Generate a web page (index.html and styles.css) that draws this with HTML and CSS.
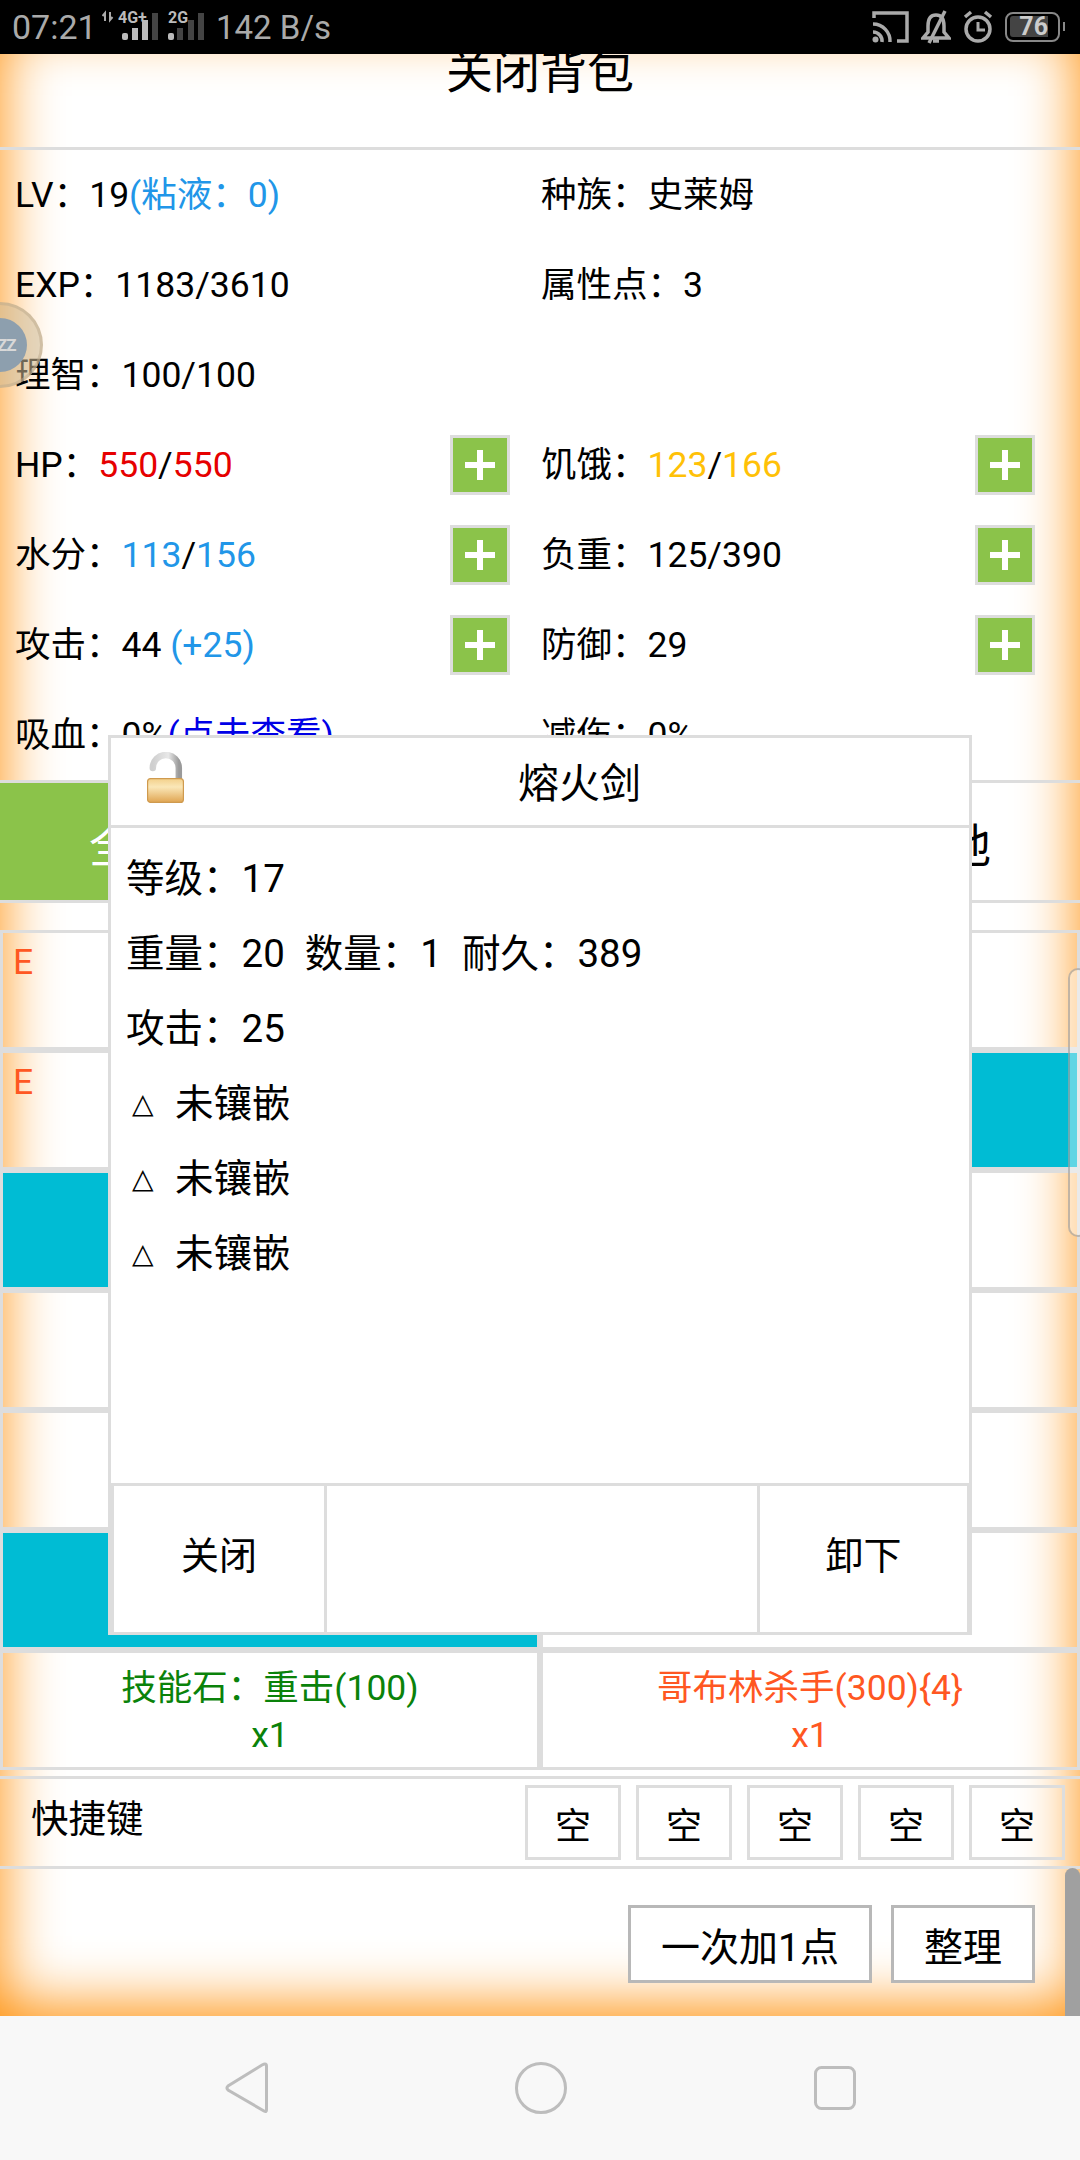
FILE: index.html
```html
<!DOCTYPE html>
<html lang="zh-CN">
<head>
<meta charset="utf-8">
<title>背包</title>
<link rel="stylesheet" href="styles.css">
</head>
<body>
<div class="screen">
  <header class="statusbar">
    <span class="time">07:21</span>
    <svg class="sig sig-4g" width="58" height="54" viewBox="0 0 58 54">
      <path d="M3 21 V13 L0.5 16 M8 12 V20 L10.5 17" fill="none" stroke="#aaa" stroke-width="2"/>
      <text x="16" y="23" class="sig-text">4G+</text>
      <rect x="20" y="33" width="6" height="7" rx="2" fill="#bbb"/>
      <rect x="30" y="28" width="6" height="12" fill="#bbb"/>
      <rect x="40" y="20" width="6" height="20" fill="#bbb"/>
      <rect x="50" y="13" width="6" height="27" fill="#444"/>
    </svg>
    <svg class="sig sig-2g" width="37" height="54" viewBox="0 0 37 54">
      <text x="0" y="23" class="sig-text">2G</text>
      <rect x="0" y="33" width="6" height="7" rx="2" fill="#bbb"/>
      <rect x="9" y="28" width="6" height="12" fill="#444"/>
      <rect x="20" y="20" width="6" height="20" fill="#444"/>
      <rect x="30" y="13" width="6" height="27" fill="#444"/>
    </svg>
    <span class="speed">142 B/s</span>
    <div class="status-right">
      <svg width="37" height="34" viewBox="0 0 37 34" fill="none" stroke="#aaa" stroke-width="3.5">
        <path d="M2 8 V3 H35 V31 H25"/>
        <path d="M1 14 A17 17 0 0 1 18 32"/>
        <path d="M1 22 A9 9 0 0 1 10 32"/>
        <circle cx="3.5" cy="29.5" r="3" fill="#aaa" stroke="none"/>
      </svg>
      <svg width="30" height="34" viewBox="0 0 30 34" fill="none" stroke="#aaa" stroke-width="3.5">
        <path d="M15 5 C9 5 7 10 7 16 V22 L2 28 H28 L23 22 V16 C23 10 21 5 15 5 Z"/>
        <path d="M12 31 H18"/>
        <path d="M24 1 L8 33"/>
      </svg>
      <svg width="30" height="34" viewBox="0 0 30 34" fill="none" stroke="#aaa" stroke-width="3.5">
        <circle cx="15" cy="19" r="12"/>
        <path d="M15 12 V20 H22" stroke-width="3"/>
        <path d="M2 7 L8 2 M28 7 L22 2"/>
      </svg>
      <div class="battery"><span class="battery-level">76</span></div>
    </div>
  </header>

  <main class="page">
    <div class="title">关闭背包</div>

    <section class="stats">
      <div class="stat"><span>LV：19<span class="blue">(粘液：0)</span></span></div>
      <div class="stat stat-r"><span>种族：史莱姆</span></div>
      <div class="stat"><span>EXP：1183/3610</span></div>
      <div class="stat stat-r"><span>属性点：3</span></div>
      <div class="stat"><span>理智：100/100</span></div>
      <div class="stat stat-r"></div>
      <div class="stat"><span>HP：<span class="red">550</span>/<span class="red">550</span></span>
        <div class="plus"><svg width="30" height="30" viewBox="0 0 30 30"><path d="M15 0 V30 M0 15 H30" stroke="#fff" stroke-width="6"/></svg></div></div>
      <div class="stat stat-r"><span>饥饿：<span class="yellow">123</span>/<span class="yellow">166</span></span>
        <div class="plus"><svg width="30" height="30" viewBox="0 0 30 30"><path d="M15 0 V30 M0 15 H30" stroke="#fff" stroke-width="6"/></svg></div></div>
      <div class="stat"><span>水分：<span class="blue">113</span>/<span class="blue">156</span></span>
        <div class="plus"><svg width="30" height="30" viewBox="0 0 30 30"><path d="M15 0 V30 M0 15 H30" stroke="#fff" stroke-width="6"/></svg></div></div>
      <div class="stat stat-r"><span>负重：125/390</span>
        <div class="plus"><svg width="30" height="30" viewBox="0 0 30 30"><path d="M15 0 V30 M0 15 H30" stroke="#fff" stroke-width="6"/></svg></div></div>
      <div class="stat"><span>攻击：44 <span class="blue">(+25)</span></span>
        <div class="plus"><svg width="30" height="30" viewBox="0 0 30 30"><path d="M15 0 V30 M0 15 H30" stroke="#fff" stroke-width="6"/></svg></div></div>
      <div class="stat stat-r"><span>防御：29</span>
        <div class="plus"><svg width="30" height="30" viewBox="0 0 30 30"><path d="M15 0 V30 M0 15 H30" stroke="#fff" stroke-width="6"/></svg></div></div>
      <div class="stat"><span>吸血：0%<span class="link">(点击查看)</span></span></div>
      <div class="stat stat-r"><span>减伤：0%</span></div>
    </section>

    <nav class="tabs">
      <div class="tab tab-on">全部</div>
      <div class="tab"></div>
      <div class="tab"></div>
      <div class="tab">其他</div>
    </nav>

    <section class="items">
      <div class="item"><span class="rank">E</span></div>
      <div class="item"></div>
      <div class="item"><span class="rank">E</span></div>
      <div class="item item-on"></div>
      <div class="item item-on"></div>
      <div class="item"></div>
      <div class="item"></div>
      <div class="item"></div>
      <div class="item"></div>
      <div class="item"></div>
      <div class="item item-on"></div>
      <div class="item"></div>
      <div class="item item-text green">技能石：重击(100)<br>x1</div>
      <div class="item item-text orange">哥布林杀手(300){4}<br>x1</div>
    </section>

    <section class="quick">
      <div class="quick-label">快捷键</div>
      <div class="slots">
        <div class="slot">空</div>
        <div class="slot">空</div>
        <div class="slot">空</div>
        <div class="slot">空</div>
        <div class="slot">空</div>
      </div>
    </section>

    <div class="actions">
      <div class="action">一次加1点</div>
      <div class="action">整理</div>
    </div>

    <div class="ball"><div class="ball-core">ZZ</div></div>
    <div class="side-tab"></div>
    <div class="scrollbar"></div>

    <div class="dialog">
      <div class="dialog-head">
        <svg class="lock" width="37" height="51" viewBox="0 0 37 51">
          <defs>
            <linearGradient id="shackle" x1="0" y1="0" x2="1" y2="0">
              <stop offset="0" stop-color="#cfcfcf"/>
              <stop offset="0.6" stop-color="#e8e8e8"/>
              <stop offset="1" stop-color="#9a9a9a"/>
            </linearGradient>
            <linearGradient id="lockbody" x1="0" y1="0" x2="0" y2="1">
              <stop offset="0" stop-color="#f3d08a"/>
              <stop offset="0.35" stop-color="#fae7b8"/>
              <stop offset="1" stop-color="#e0a552"/>
            </linearGradient>
          </defs>
          <path d="M5.8 16 A13 13 0 0 1 31.8 16 V27" fill="none" stroke="url(#shackle)" stroke-width="6.5" stroke-linecap="round"/>
          <rect x="0.6" y="26.6" width="35.8" height="23.8" rx="3" fill="url(#lockbody)" stroke="#cf9a4e" stroke-width="1.2"/>
        </svg>
        <div class="dialog-title">熔火剑</div>
      </div>
      <div class="dialog-body">
        <div class="line">等级：17</div>
        <div class="line">重量：20<span class="sep"></span>数量：1<span class="sep"></span>耐久：389</div>
        <div class="line">攻击：25</div>
        <div class="line"><span class="tri">△</span>未镶嵌</div>
        <div class="line"><span class="tri">△</span>未镶嵌</div>
        <div class="line"><span class="tri">△</span>未镶嵌</div>
      </div>
      <div class="dialog-foot">
        <div class="foot-btn foot-a">关闭</div>
        <div class="foot-btn foot-b"></div>
        <div class="foot-btn foot-c">卸下</div>
      </div>
    </div>
  </main>

  <footer class="navbar">
    <svg width="43" height="52" viewBox="0 0 43 52"><path d="M40 2 Q41.500 2 41.500 4 V48 Q41.500 50.500 39 49 L3 28 Q1 26 3 24 L37 3 Q39 2 40 2 Z" class="nav-i"/></svg>
    <svg width="52" height="52" viewBox="0 0 52 52"><circle cx="26" cy="26" r="24.500" class="nav-i"/></svg>
    <svg width="42" height="44" viewBox="0 0 42 44"><rect x="1.500" y="1.500" width="39" height="41" rx="6" class="nav-i"/></svg>
  </footer>
</div>
</body>
</html>
```

FILE: styles.css
```css
* { box-sizing: border-box; }
html, body { margin: 0; padding: 0; width: 1080px; height: 2160px; overflow: hidden; background: #fff; }
body { font-family: Roboto, "Noto Sans CJK SC", sans-serif; color: #000; font-size: 35.500px; }

.screen { display: flex; flex-direction: column; width: 1080px; height: 2160px; }

/* status bar */
.statusbar { height: 54px; background: #000; color: #aaa; display: flex; align-items: center; padding: 0 20px 0 12px; flex: none; }
.time { font-size: 34px; width: 90px; }
.speed { font-size: 33px; margin-left: 11px; }
.sig { display: block; }
.sig-2g { margin-left: 8px; }
.sig-text { font: bold 16px Roboto, sans-serif; fill: #bbb; }
.status-right { margin-left: auto; display: flex; align-items: center; gap: 12px; }
.battery { position: relative; width: 55px; height: 30px; border: 2.5px solid #888; border-radius: 8px; padding: 2px 0 2px 3px; }
.battery::after { content: ""; position: absolute; right: -7px; top: 8px; width: 2.5px; height: 9px; background: #888; }
.battery-level { display: block; width: 38px; height: 21px; background: #444; color: #ccc; font-size: 25px; font-weight: 700; line-height: 21px; text-align: right; border-radius: 3px 0 0 3px; }

/* page */
.page { position: relative; flex: 1; overflow: hidden; isolation: isolate; }
.page::before { content: ""; position: absolute; z-index: -1; left: 0; right: 0; top: -22px; bottom: 0; box-shadow: inset 0 -8px 60px #ff8c00; }

.title { height: 96px; border-bottom: 3px solid #ddd; font-size: 47px; line-height: 36px; text-align: center; }

.stats { display: grid; grid-template-columns: 540px 540px; grid-auto-rows: 90px; }
.stat { display: flex; align-items: center; justify-content: space-between; padding: 0 30px 0 15px; white-space: pre; }
.stat > span { margin-bottom: 8px; }
.stat-r { padding: 0 45px 0 1px; }
.blue { color: #2196e8; }
.red { color: #e60000; }
.yellow { color: #ffc107; }
.link { color: #0000e6; }
.plus { width: 60px; height: 60px; background: #8bc34a; border: 3px solid #ddd; display: flex; align-items: center; justify-content: center; }

.tabs { display: flex; height: 123px; border-top: 3px solid #ddd; border-bottom: 3px solid #ddd; }
.tab { width: 270px; font-size: 46px; display: flex; align-items: center; justify-content: center; }
.tab-on { background: #8bc34a; color: #fff; }

.items { display: grid; grid-template-columns: 540px 540px; grid-auto-rows: 120px; margin-top: 27px; }
.item { border: 3px solid #ddd; padding: 0 10px; }
.item-on { background: #00bcd4; }
.rank { color: #ff5722; display: block; margin-top: 8px; line-height: 42px; }
.item-text { display: block; text-align: center; padding-top: 12px; line-height: 47px; }
.green { color: #0a820a; }
.orange { color: #ff5722; }

.quick { margin-top: 6px; height: 93px; border-top: 3px solid #ddd; border-bottom: 3px solid #ddd; display: flex; align-items: center; justify-content: space-between; padding: 0 15px 0 31px; }
.quick-label { margin-bottom: 14px; font-size: 37.500px; }
.slots { display: flex; gap: 15px; }
.slot { width: 96px; height: 75px; border: 3px solid #ddd; display: flex; align-items: center; justify-content: center; font-size: 36px; }

.actions { display: flex; justify-content: flex-end; gap: 19px; padding: 36px 45px 0 0; }
.action { height: 78px; border: 3px solid #b8b8b8; padding: 0 30px; background: #fff; font-size: 39px; display: flex; align-items: center; }

/* overlays */
.ball { position: absolute; left: -43px; top: 248px; width: 86px; height: 86px; border-radius: 50%; background: rgba(205, 185, 150, 0.55); border: 3px solid rgba(190, 170, 140, 0.5); display: flex; align-items: center; justify-content: center; }
.ball-core { width: 54px; height: 54px; border-radius: 50%; background: #8d9fae; color: #d8d8d8; font-size: 17px; font-weight: 700; line-height: 54px; text-indent: 24px; letter-spacing: -1px; overflow: hidden; white-space: nowrap; }
.side-tab { position: absolute; right: -8px; top: 914px; width: 20px; height: 269px; border: 2px solid rgba(120, 120, 120, 0.45); border-radius: 10px; background: rgba(255, 255, 255, 0.38); }
.scrollbar { position: absolute; right: 0; top: 1814px; width: 15px; height: 160px; border-radius: 8px; background: #a0a0a0; }

/* dialog */
.dialog { position: absolute; left: 108px; top: 681px; width: 864px; height: 900px; border: 3px solid #ddd; background: #fff; display: flex; flex-direction: column; font-size: 38.500px; }
.dialog-head { height: 90px; border-bottom: 3px solid #ddd; display: flex; align-items: center; padding-left: 36px; flex: none; }
.lock { flex: none; margin-bottom: 9px; }
.dialog-title { flex: 1; text-align: center; font-size: 41px; margin: 0 0 3px 6px; }
.dialog-body { flex: 1; padding: 13px 0 0 15px; }
.line { height: 75px; line-height: 75px; white-space: pre; display: flex; align-items: center; }
.sep { display: inline-block; width: 20px; }
.tri { width: 49px; padding-left: 6px; font-size: 28px; flex: none; font-family: "DejaVu Sans", sans-serif; }
.dialog-foot { flex: none; height: 149px; background: #ddd; padding: 3px 2px 0 3px; display: flex; gap: 3px; font-size: 38px; }
.foot-btn { background: #fff; display: flex; align-items: center; justify-content: center; padding-bottom: 13px; }
.foot-a { width: 210px; }
.foot-b { width: 430px; }
.foot-c { width: 207px; }

/* nav bar */
.navbar { height: 144px; background: #f8f8f8; display: flex; align-items: center; justify-content: center; gap: 247px; flex: none; }
.nav-i { fill: none; stroke: #bdbdbd; stroke-width: 3; }
```
